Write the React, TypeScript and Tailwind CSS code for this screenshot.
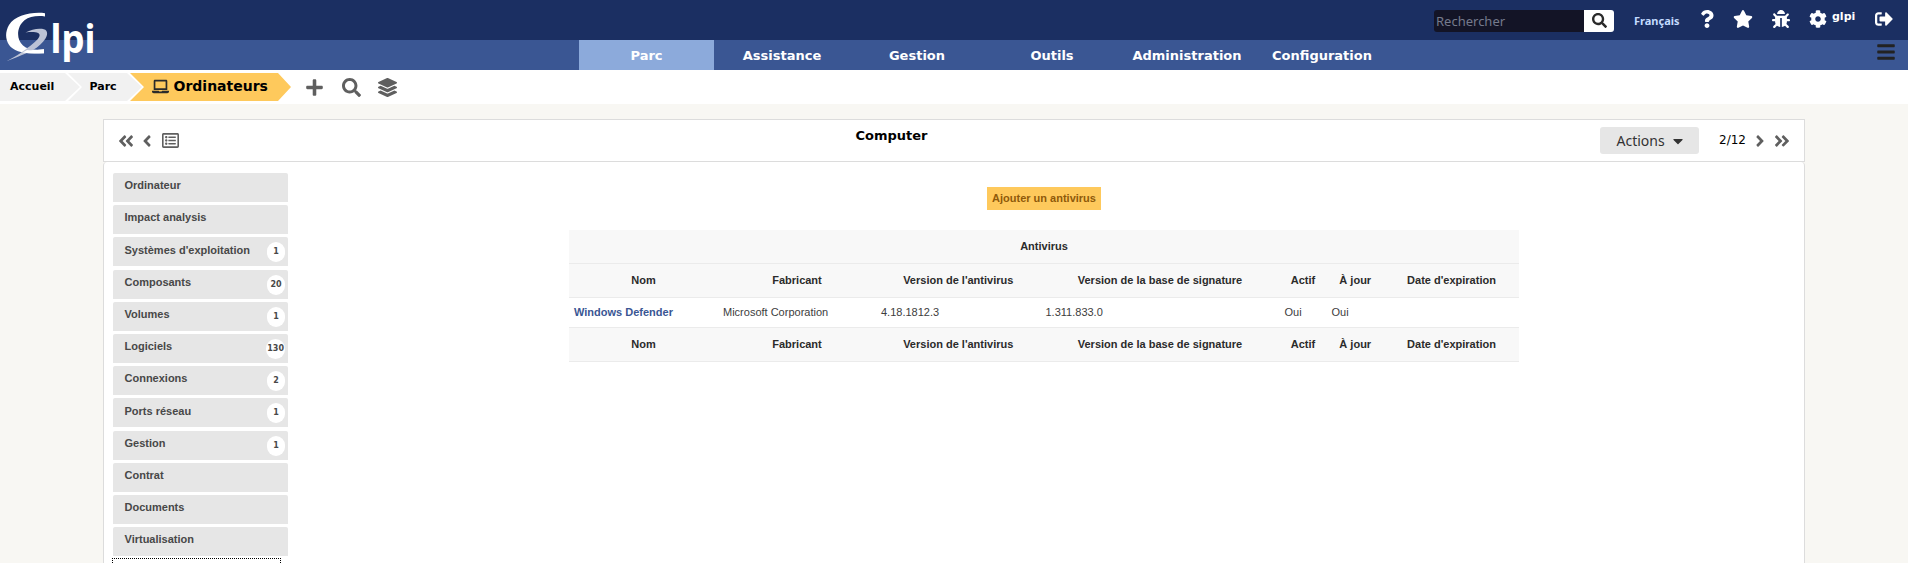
import React from "react";
import {
  FaAngleDoubleLeft,
  FaAngleDoubleRight,
  FaAngleLeft,
  FaAngleRight,
  FaBars,
  FaBug,
  FaCaretDown,
  FaCog,
  FaLaptop,
  FaLayerGroup,
  FaPlus,
  FaQuestion,
  FaRegListAlt,
  FaSearch,
  FaSignOutAlt,
  FaStar,
} from "react-icons/fa";

const menu = ["Parc", "Assistance", "Gestion", "Outils", "Administration", "Configuration"];

const tabs: { label: string; count?: number; gap: string; text?: string }[] = [
  { label: "Ordinateur", gap: "mb-[3px]" },
  { label: "Impact analysis", gap: "mb-[3px]" },
  { label: "Systèmes d'exploitation", count: 1, gap: "mb-[4px]", text: "mt-[7px]" },
  { label: "Composants", count: 20, gap: "mb-[3px]" },
  { label: "Volumes", count: 1, gap: "mb-[3px]" },
  { label: "Logiciels", count: 130, gap: "mb-[3px]" },
  { label: "Connexions", count: 2, gap: "mb-[3px]" },
  { label: "Ports réseau", count: 1, gap: "mb-[4px]", text: "mt-[7px]" },
  { label: "Gestion", count: 1, gap: "mb-[3px]" },
  { label: "Contrat", gap: "mb-[3px]" },
  { label: "Documents", gap: "mb-[3px]" },
  { label: "Virtualisation", gap: "mb-[2px]" },
];

const columns = [
  "Nom",
  "Fabricant",
  "Version de l'antivirus",
  "Version de la base de signature",
  "Actif",
  "À jour",
  "Date d'expiration",
];

const grid = "grid grid-cols-[149px_158px_164.5px_239px_47px_57.5px_135px] items-center border-b border-[#ebebeb]";

function Logo() {
  return (
    <svg className="ml-[4px] mt-[4px] block h-[66px] w-[94px]" viewBox="4 4 94 66">
      <path
        d="M45 13.200 C31 11.600 15 15.500 9 25 C3 35.500 6.500 47.500 18 51.300 C25 53.600 34 53.500 44 53.200 L44 49.200 C35 50.300 27.500 49.500 23 45.500 C16 39.500 16.500 27 24.500 20.300 C29.500 16.200 37 15.600 45 16.400 Z"
        fill="#fff"
      />
      <path
        d="M25.500 32.500 C31 29.500 37 28.200 42 28.800 C47.500 29.500 48.500 33.500 45.500 38.500 C43 42.700 38.500 46.800 33 50 L27 53 C20.500 55.800 13 58.700 6.500 61.200 C14 57.300 20 53.800 25.500 49.500 C31 45 38 40.500 39.500 36 C40.500 32.500 35 31.300 25.500 32.500 Z"
        fill="#bcc3d6"
      />
      <path d="M27 50 C32 50.500 38 50 44 49.200 L44 53.200 C36 53.500 29 53.700 22.500 52.600 Z" fill="#fff" />
      <text
        x="50.500"
        y="52.500"
        textLength="45"
        lengthAdjust="spacingAndGlyphs"
        className="fill-white font-['Noto_Sans',sans-serif] text-[39px] font-bold"
      >
        lpi
      </text>
    </svg>
  );
}

function HeaderRow() {
  return (
    <div className={`${grid} h-[34px] bg-[#f8f8f8] text-center font-bold text-[#2b2b2b]`}>
      {columns.map((c) => (
        <div key={c} className="whitespace-nowrap">
          {c}
        </div>
      ))}
    </div>
  );
}

export default function App() {
  return (
    <div className="flex h-[563px] w-[1908px] flex-col overflow-hidden bg-[#f8f7f3] font-['DejaVu_Sans',sans-serif] text-black">
      <header className="flex h-[70px] shrink-0 bg-[linear-gradient(#1b2f62_40px,#3a5693_40px)]">
        <div className="w-[579px]">
          <Logo />
        </div>
        <nav className="mt-[40px] flex w-[810px] text-[13px] font-bold text-white">
          {menu.map((m, i) => (
            <a
              key={m}
              className={`flex h-[30px] w-[135px] items-center justify-center pt-px ${i === 0 ? "bg-[#8caadb]" : "pl-px"}`}
            >
              {m}
            </a>
          ))}
        </nav>
        <div className="flex flex-1 flex-col">
          <div className="flex h-[40px] items-start pl-[45px] text-white">
            <div className="mt-[10px] flex h-[22px] w-[180px] overflow-hidden rounded-[3px]">
              <div className="flex w-[150px] items-center bg-[#131426] pl-[2px] pt-px font-['Noto_Sans',sans-serif] text-[13px] text-[#757a8c]">
                Rechercher
              </div>
              <div className="flex w-[30px] items-center justify-center bg-white pb-[2px] text-[#2b2b2b]">
                <FaSearch size={15} />
              </div>
            </div>
            <span className="ml-[20px] mt-[14px] w-[66px] font-['Noto_Sans',sans-serif] text-[11px] leading-[14px] font-bold text-[#c3dbff]">
              Français
            </span>
            <FaQuestion size={18} className="mt-[10px] w-[14px]" />
            <FaStar size={20} className="ml-[19px] mt-[9px]" />
            <FaBug size={18} className="ml-[19px] mt-[10px]" />
            <FaCog size={18} className="ml-[19px] mt-[10px]" />
            <span className="ml-[5px] mt-[10px] w-[43px] text-[11px] leading-[14px] font-bold">glpi</span>
            <FaSignOutAlt size={18} className="mt-[10px]" />
          </div>
          <div className="flex justify-end pr-[13px] pt-[2px] text-[#222]">
            <FaBars size={20} className="w-[18px]" />
          </div>
        </div>
      </header>

      <div className="flex h-[34px] shrink-0 items-center bg-white text-[11px] font-bold">
        <div className="flex h-[28px] w-[80px] items-center bg-[#f1f1f1] pl-[10px] [clip-path:polygon(0_0,65px_0,80px_50%,65px_100%,0_100%)]">
          Accueil
        </div>
        <div className="-ml-[12px] flex h-[28px] w-[74px] items-center bg-[#f1f1f1] pl-[21.5px] [clip-path:polygon(0_0,59px_0,74px_50%,59px_100%,0_100%,14px_50%)]">
          Parc
        </div>
        <div className="-ml-[12px] flex h-[28px] w-[161px] items-center bg-[#fec95c] pl-[22px] text-[14px] [clip-path:polygon(0_0,148px_0,161px_50%,148px_100%,0_100%,14px_50%)]">
          <FaLaptop size={17} className="mt-[-2px] text-[#2b2b2b]" />
          <span className="ml-[4.5px] pb-[2px]">Ordinateurs</span>
        </div>
        <div className="ml-[14px] flex items-center text-[#5f5f5f]">
          <FaPlus size={19} />
          <FaSearch size={19} className="ml-[18px]" />
          <FaLayerGroup size={19} className="ml-[17px]" />
        </div>
      </div>

      <main className="ml-[103px] mt-[15px] flex w-[1702px] flex-1 flex-col">
        <div className="flex h-[43px] shrink-0 items-center border border-[#dcdcdc] bg-white text-[#5f5f5f]">
          <FaAngleDoubleLeft size={18} className="ml-[13px]" />
          <FaAngleLeft size={18} className="ml-[3px]" />
          <FaRegListAlt size={17} className="ml-[6px]" />
          <div className="flex-1 pb-[10px] pl-[676.5px] text-[13px] font-bold text-black">Computer</div>
          <button className="flex h-[27px] w-[99px] items-center rounded-[3px] bg-[#e6e6e6] pl-[16.5px] font-['Noto_Sans',sans-serif] text-[14px] text-[#333]">
            <span className="w-[47.5px]">Actions</span>
            <FaCaretDown size={16} className="ml-[6px]" />
          </button>
          <span className="ml-[20px] w-[27px] pb-[2px] text-[12px] text-black">2/12</span>
          <FaAngleRight size={18} className="ml-[5px]" />
          <FaAngleDoubleRight size={18} className="ml-[4px] mr-[13px]" />
        </div>

        <section className="flex h-[420px] rounded-[4px] border-x border-[#dcdcdc] bg-white pl-[9px] font-['Liberation_Sans',Arial,sans-serif] text-[11px]">
          <ul className="w-[175px] shrink-0 pt-[11px] font-bold text-[#484848]">
            {tabs.map((t) => (
              <li
                key={t.label}
                className={`flex h-[29px] items-start justify-between rounded-t-[2px] bg-[#e6e6e6] pl-[11.5px] pr-[3px] ${t.gap}`}
              >
                <span className={`leading-[13px] ${t.text ?? "mt-[6px]"}`}>{t.label}</span>
                {t.count !== undefined && (
                  <span className="mt-[5px] flex h-[20px] min-w-[18px] items-center justify-center rounded-full bg-white px-px font-['DejaVu_Sans',sans-serif] text-[8px]">
                    {t.count}
                  </span>
                )}
              </li>
            ))}
            <li className="-ml-px h-[29px] w-[169px] border border-dotted border-black bg-white" />
          </ul>

          <div className="flex flex-1 flex-col items-center pr-[4px] pt-[25px]">
            <a className="flex h-[23px] w-[114px] items-center justify-center bg-[#fec95c] font-bold whitespace-nowrap text-[#8f5a0a]">
              Ajouter un antivirus
            </a>
            <div className="mt-[20px] w-[950px] text-[#3d3d3d]">
              <div className="flex h-[34px] items-center justify-center border-b border-[#ebebeb] bg-[#f8f8f8] font-bold text-[#2b2b2b]">
                Antivirus
              </div>
              <HeaderRow />
              <div className={`${grid} h-[30px] [&>div]:pl-[5px]`}>
                <div className="font-bold text-[#3a5693]">Windows Defender</div>
                <div>Microsoft Corporation</div>
                <div>4.18.1812.3</div>
                <div>1.311.833.0</div>
                <div>Oui</div>
                <div>Oui</div>
                <div />
              </div>
              <HeaderRow />
            </div>
          </div>
        </section>
      </main>
    </div>
  );
}
